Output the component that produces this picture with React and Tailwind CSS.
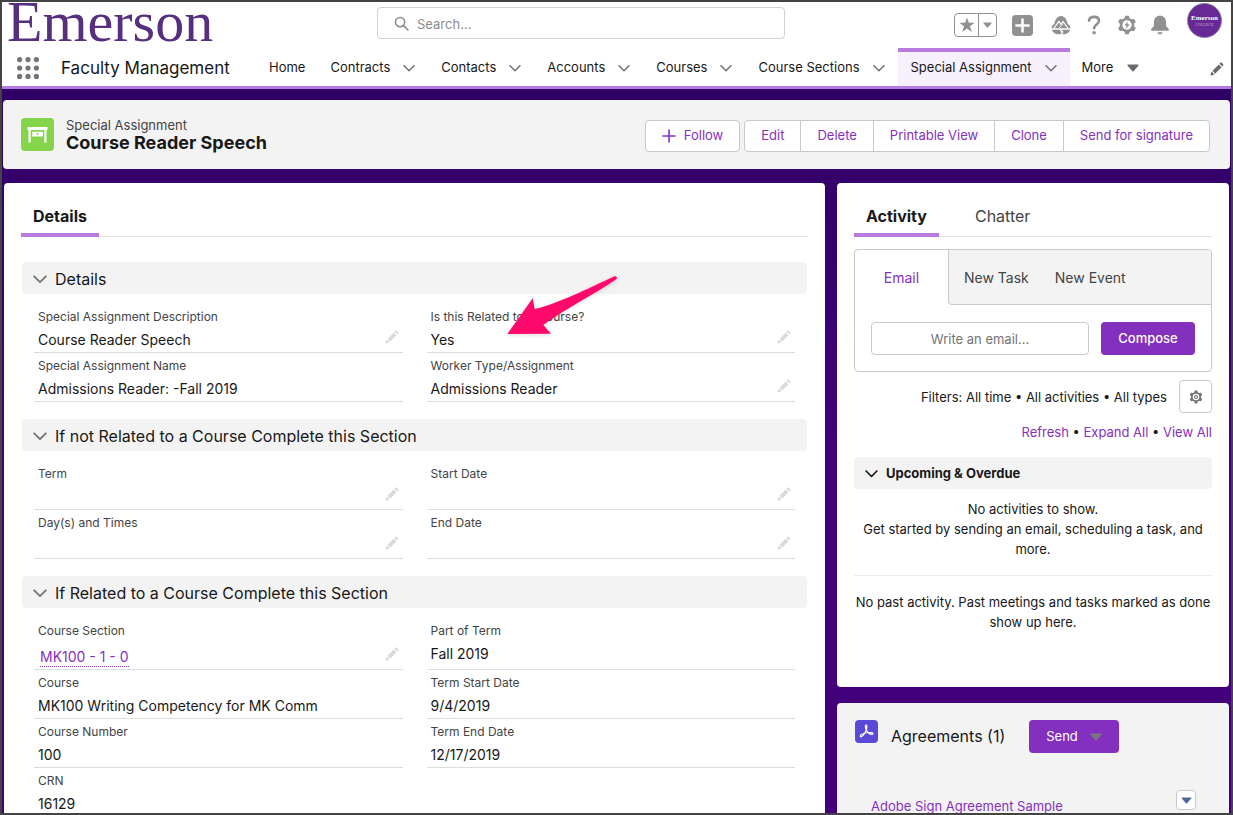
import React from 'react';

const EDIT_PATH =
  'M9.5 33.4l8.9 8.9c.4.4 1 .4 1.4 0L42 20c.4-.4.4-1 0-1.4l-8.8-8.8c-.4-.4-1-.4-1.4 0L9.5 32.1c-.4.4-.4 1 0 1.3zM36.1 5.7c-.4.4-.4 1 0 1.4l8.8 8.8c.4.4 1 .4 1.4 0l2.5-2.5c1.6-1.5 1.6-3.9 0-5.5l-4.7-4.7c-1.6-1.6-4.1-1.6-5.7 0l-2.3 2.5zM2.1 48.2c-.2 1 .7 1.9 1.7 1.7l10.9-2.6c.4-.1.7-.3.9-.5l.2-.2c.2-.2.3-.9-.1-1.3l-9-9c-.4-.4-1.1-.3-1.3-.1l-.2.2c-.3.3-.4.6-.5.9L2.1 48.2z';

function Pencil({ className }) {
  return (
    <svg viewBox="0 0 52 52" className={className} fill="currentColor" aria-hidden="true">
      <path d={EDIT_PATH} />
    </svg>
  );
}

function Chevron({ className }) {
  return (
    <svg viewBox="0 0 14 14" className={className} fill="none" stroke="currentColor" strokeWidth="1.8" strokeLinecap="round" strokeLinejoin="round" aria-hidden="true">
      <path d="M1.2 4.3 7 10.2l5.8-5.9" />
    </svg>
  );
}

function Triangle({ className }) {
  return (
    <svg viewBox="0 0 12 8" className={className} fill="currentColor" aria-hidden="true">
      <path d="M1.2.6h9.6c.7 0 1 .7.6 1.200L6.600 7.200c-.3.4-.9.4-1.200 0L.6 1.800C.2 1.300.500.600 1.200.600z" />
    </svg>
  );
}

function Gear({ className, bolt, hole }) {
  return (
    <svg viewBox="0 0 20 20" className={className} fill="currentColor" aria-hidden="true">
      <circle cx="10" cy="10" r="7.300" />
      {[0, 60, 120, 180, 240, 300].map((a) => (
        <path key={a} transform={`rotate(${a} 10 10)`} d="M8.100.8h3.800l.7 3.200H7.400z" />
      ))}
      <circle cx="10" cy="10" r="4.700" fill={hole} />
      {bolt ? <path d="M10.800 6.200 7.300 10.600h2.200l-.6 3.300 3.700-4.700h-2.300z" /> : <circle cx="10" cy="10" r="3" />}
      {!bolt && <circle cx="10" cy="10" r="1.300" fill={hole} />}
    </svg>
  );
}

function AppMenu() {
  return (
    <button aria-label="App launcher" className="ml-[15px] mr-[22px] shrink-0">
      <svg viewBox="0 0 22 22" className="size-[22px] text-[#747474]" fill="currentColor" aria-hidden="true">
        {[2.600, 11, 19.400].map((y) => [2.600, 11, 19.400].map((x) => <circle key={x + '-' + y} cx={x} cy={y} r="2.600" />))}
      </svg>
    </button>
  );
}

function TopBar() {
  return (
    <div className="flex h-[46px] items-center">
      <a href="#home" aria-label="Emerson home" className="w-[375px] shrink-0 self-start pl-[5px] font-['Liberation_Serif',serif] text-[58px] leading-10 text-[#56307e]">
        Emerson
      </a>
      <label className="-mt-1 flex h-8 max-w-[408px] flex-1 items-center rounded-[4px] border border-[#d2d2d2] pl-4 text-[#8c8c8c]">
        <svg viewBox="0 0 16 16" className="size-[15px] shrink-0" fill="none" stroke="currentColor" strokeWidth="1.700" strokeLinecap="round" aria-hidden="true">
          <circle cx="6.500" cy="6.500" r="4.900" />
          <path d="m10.300 10.300 4.600 4.600" />
        </svg>
        <span className="sr-only">Search</span>
        <input type="text" placeholder="Search..." className="ml-2 h-full w-full bg-transparent pt-px text-[13px] outline-none placeholder:text-[#8c8c8c]" />
      </label>
      <div className="ml-auto flex items-center gap-[13px] pr-[9px] text-[#919191]">
        <div className="mr-[2px] flex h-6 w-[43px] rounded-[4px] border border-[#919191]">
          <button aria-label="Favorite" className="flex w-6 items-center justify-center border-r border-[#919191]">
            <svg viewBox="0 0 16 16" className="size-4" fill="currentColor" aria-hidden="true">
              <path d="M8 .4l1.900 5.400h5.700L11 9.200l1.800 5.800L8 11.500 3.200 15 5 9.200.4 5.800h5.700z" />
            </svg>
          </button>
          <button aria-label="Favorites list" className="flex flex-1 items-center justify-center">
            <Triangle className="h-[6px] w-[9px]" />
          </button>
        </div>
        <button aria-label="Global actions" className="mr-[5px]">
          <svg viewBox="0 0 20 20" className="size-[21px]" aria-hidden="true">
            <rect width="20" height="20" rx="3.500" fill="currentColor" />
            <path d="M10 4.200v11.600M4.200 10h11.600" stroke="#fff" strokeWidth="2.400" strokeLinecap="round" />
          </svg>
        </button>
        <button aria-label="Guidance center">
          <svg viewBox="0 0 20 20" className="size-5" fill="currentColor" aria-hidden="true">
            <path d="M.6 13.300c0-2.400 1-3.500 2.600-4.300C4 4.600 6.500 1 10 1s6 3.600 6.800 8c1.600.8 2.600 1.900 2.600 4.300z" />
            <path d="M2.800 13.500 7.900 6.300l2.100 3 2-2.800 5.200 7" fill="none" stroke="#fff" strokeWidth="1.200" strokeLinejoin="round" />
            <path d="m8.300 12.800 3.700-4.300" fill="none" stroke="#fff" strokeWidth="1" />
            <path d="M.9 14.800h18.200c-.8 3-3.200 4.400-6.400 4.400H7.300c-3.200 0-5.600-1.400-6.400-4.400z" />
            <path d="M12 14.200c-3 .6-2.600 1.500-1 2.300 1 .5.500 1.800-1.500 2.900" fill="none" stroke="#fff" strokeWidth="1.400" />
          </svg>
        </button>
        <button aria-label="Help" className="flex size-5 items-center justify-center">
          <svg viewBox="0 0 14 20" className="h-5 w-[14px]" fill="none" stroke="currentColor" strokeWidth="2.600" strokeLinecap="round" aria-hidden="true">
            <path d="M2 5.600C2.300 3.200 4.200 1.900 7 1.900c2.900 0 5 1.500 5 4 0 3.400-4.900 3.700-4.900 7.300" />
            <circle cx="7.100" cy="17.700" r="1.800" fill="currentColor" stroke="none" />
          </svg>
        </button>
        <button aria-label="Setup">
          <Gear bolt hole="#fff" className="size-5" />
        </button>
        <button aria-label="Notifications">
          <svg viewBox="0 0 20 20" className="size-5" fill="currentColor" aria-hidden="true">
            <path d="M10 .8c-3.600 0-6 2.500-6 6v3.700c0 1.500-2.900 2.600-2.900 4.200 0 .6.400 1 1 1h15.800c.6 0 1-.4 1-1 0-1.600-2.900-2.700-2.900-4.200V6.800c0-3.500-2.400-6-6-6zM7.500 17.200h5c-.2 1.300-1.200 2.100-2.500 2.100s-2.300-.8-2.500-2.100z" />
          </svg>
        </button>
        <button aria-label="User profile" className="-mt-[9px] ml-1 flex size-[35px] flex-col items-center justify-center rounded-full border border-[#8e86a0] bg-[#672996] font-['Liberation_Serif',serif] text-white">
          <span className="text-[7px] leading-[7px] font-bold">Emerson</span>
          <span className="text-[4px] leading-[5px] text-[#c9aede]">COLLEGE</span>
        </button>
      </div>
    </div>
  );
}

const NAV = ['Contracts', 'Contacts', 'Accounts', 'Courses', 'Course Sections', 'Special Assignment'];

function NavBar() {
  return (
    <nav className="flex h-[41px] items-stretch border-b-[3px] border-[#b77ce0] whitespace-nowrap">
      <div className="flex items-center pt-[2px]">
        <AppMenu />
        <span className="w-[196px] text-[17px] leading-6">Faculty Management</span>
      </div>
      <a href="#home" className="flex items-center px-3 pt-[2px] text-[13px]">Home</a>
      {NAV.map((label) => {
        const active = label === 'Special Assignment';
        return (
          <div
            key={label}
            className={
              active
                ? 'flex items-center gap-[13px] border-t-4 border-[#b77ce0] bg-[#f7f1fd] px-[13px] pb-[2px]'
                : 'flex items-center gap-[13px] px-[13px] pt-[2px]'
            }
          >
            <a href={'#' + label} className="text-[13px]">{label}</a>
            <button aria-label={label + ' list'} className="text-[#747474]">
              <Chevron className="size-3" />
            </button>
          </div>
        );
      })}
      <button className="flex items-center gap-[14px] px-3 pt-[2px] text-[13px]">
        More
        <Triangle className="h-2 w-3 text-[#6b6b6b]" />
      </button>
      <button aria-label="Edit navigation" className="mr-[7px] ml-auto pt-[4px] text-[#6b6b6b]">
        <Pencil className="size-[14px]" />
      </button>
    </nav>
  );
}

function RecordHeader() {
  const actions = ['Edit', 'Delete', 'Printable View', 'Clone', 'Send for signature'];
  return (
    <header className="mx-[1px] flex h-[69px] items-center rounded-[4px] bg-[#f3f3f3] pr-5 pl-[18px]">
      <svg viewBox="0 0 33 33" className="size-[33px] shrink-0" aria-hidden="true">
        <rect width="33" height="33" rx="4" fill="#86d44b" />
        <path fill="#fff" d="M6.500 9h20v3h-1v12.500h-2.200V12H9.700v12.500H7.500V12h-1z" />
        <rect x="11.300" y="13.700" width="10.600" height="4.800" rx=".6" fill="#fff" />
        <circle cx="16.600" cy="16" r="1" fill="#86d44b" />
      </svg>
      <div className="ml-3 flex-1">
        <p className="text-[13px] leading-4 text-[#444444]">Special Assignment</p>
        <h1 className="text-[18px] leading-5 font-bold">Course Reader Speech</h1>
      </div>
      <div className="mt-[2px] flex h-8 gap-1 text-[13px] text-[#8430bf]">
        <button className="flex items-center gap-2 rounded-[4px] border border-[#c9c9c9] bg-white px-4 pt-px">
          <svg viewBox="0 0 14 14" className="size-[14px]" fill="none" stroke="currentColor" strokeWidth="1.600" strokeLinecap="round" aria-hidden="true">
            <path d="M7 1v12M1 7h12" />
          </svg>
          Follow
        </button>
        <div className="flex divide-x divide-[#c9c9c9] rounded-[4px] border border-[#c9c9c9] bg-white">
          {actions.map((a) => (
            <button key={a} className="px-4 pt-px">{a}</button>
          ))}
        </div>
      </div>
    </header>
  );
}

function Arrow() {
  return (
    <svg viewBox="0 0 112 60" className="pointer-events-none absolute -top-[29px] left-20 h-[60px] w-28 drop-shadow-sm" aria-hidden="true">
      <path fill="#ff0a6c" d="M.3 59 25.700 23.300l2 10.800C50 29 82 13 107 1.500c2.600-.9 3.900 1.500 2 3C86 20 58 34 36.300 50l7.700 8.700z" />
    </svg>
  );
}

function Field({ label, value, editable, link, arrow }) {
  return (
    <div className="relative flex items-end border-b border-[#dddddd] px-1 pt-[5px] pb-[2px]">
      <div className="flex-1 self-stretch">
        <dt className="text-[12px] leading-4 text-[#444444]">{label}</dt>
        <dd className="mt-[5px] min-h-5 text-[14px] leading-5">
          {link ? (
            <a href="#course-section" className="mt-1 ml-[2px] inline-block border-b border-dotted border-[#8430bf] leading-[18px] text-[#8430bf]">{value}</a>
          ) : (
            value
          )}
        </dd>
      </div>
      {editable && (
        <button aria-label={'Edit ' + label} className="mb-[6px] text-[#dcdad9]">
          <Pencil className="size-[14px]" />
        </button>
      )}
      {arrow && <Arrow />}
    </div>
  );
}

const SECTIONS = [
  {
    title: 'Details',
    fields: [
      { label: 'Special Assignment Description', value: 'Course Reader Speech', editable: true },
      { label: 'Is this Related to a Course?', value: 'Yes', editable: true, arrow: true },
      { label: 'Special Assignment Name', value: 'Admissions Reader: -Fall 2019' },
      { label: 'Worker Type/Assignment', value: 'Admissions Reader', editable: true },
    ],
  },
  {
    title: 'If not Related to a Course Complete this Section',
    fields: [
      { label: 'Term', editable: true },
      { label: 'Start Date', editable: true },
      { label: 'Day(s) and Times', editable: true },
      { label: 'End Date', editable: true },
    ],
  },
  {
    title: 'If Related to a Course Complete this Section',
    fields: [
      { label: 'Course Section', value: 'MK100 - 1 - 0', editable: true, link: true },
      { label: 'Part of Term', value: 'Fall 2019' },
      { label: 'Course', value: 'MK100 Writing Competency for MK Comm' },
      { label: 'Term Start Date', value: '9/4/2019' },
      { label: 'Course Number', value: '100' },
      { label: 'Term End Date', value: '12/17/2019' },
      { label: 'CRN', value: '16129' },
    ],
  },
];

function Tabs({ tabs }) {
  return (
    <div className="flex h-[54px] border-b border-[#e2e2e2]">
      {tabs.map((t, i) => (
        <button
          key={t}
          className={
            i === 0
              ? '-mb-px border-b-4 border-[#b77ce0] px-3 pt-[16px] text-[16px] font-bold'
              : 'ml-6 px-3 pt-[13px] text-[16px] text-[#444444]'
          }
        >
          {t}
        </button>
      ))}
    </div>
  );
}

function DetailsCard() {
  return (
    <section className="overflow-hidden rounded-t-[4px] bg-white px-[17px]">
      <Tabs tabs={['Details']} />
      <div className="space-y-[17px] px-px pt-[25px]">
        {SECTIONS.map((s) => (
          <section key={s.title}>
            <h2>
              <button className="flex h-8 w-full items-center gap-2 rounded-[4px] bg-[#f3f3f3] pt-px pl-[11px] text-[16px]">
                <Chevron className="size-[14px] text-[#747474]" />
                {s.title}
              </button>
            </h2>
            <dl className="mt-[10px] grid grid-cols-2 gap-x-6 px-3">
              {s.fields.map((f) => (
                <Field key={f.label} {...f} />
              ))}
            </dl>
          </section>
        ))}
      </div>
    </section>
  );
}

function ActivityCard() {
  return (
    <section className="rounded-[4px] bg-white px-[17px] pb-[55px]">
      <Tabs tabs={['Activity', 'Chatter']} />
      <div className="mt-3 overflow-hidden rounded-[4px] border border-[#c9c9c9]">
        <div className="flex h-[55px] text-[14px] text-[#444444]">
          <button className="w-[93px] text-[#8430bf]">Email</button>
          <div className="flex flex-1 gap-[26px] rounded-bl-[4px] border-b border-l border-[#c9c9c9] bg-[#f3f3f3] pl-[15px]">
            <button>New Task</button>
            <button>New Event</button>
          </div>
        </div>
        <div className="flex gap-3 px-4 pt-[17px] pb-4 text-[13px]">
          <input
            type="text"
            aria-label="Write an email"
            placeholder="Write an email..."
            className="h-[33px] min-w-0 flex-1 rounded-[4px] border border-[#c9c9c9] text-center outline-none placeholder:text-[#747474]"
          />
          <button className="h-[33px] w-[94px] rounded-[4px] bg-[#8430bf] pt-px font-medium text-white">Compose</button>
        </div>
      </div>
      <div className="mt-2 flex items-center justify-end gap-3 text-[13px]">
        <p className="pt-[3px]">Filters: All time • All activities • All types</p>
        <button aria-label="Filter settings" className="flex size-[33px] items-center justify-center rounded-[4px] border border-[#c9c9c9] text-[#747474]">
          <Gear hole="#fff" className="size-[14px]" />
        </button>
      </div>
      <p className="mt-[9px] text-right text-[13px] leading-5">
        <a href="#refresh" className="text-[#8430bf]">Refresh</a> • <a href="#expand" className="text-[#8430bf]">Expand All</a> • <a href="#view" className="text-[#8430bf]">View All</a>
      </p>
      <h2 className="mt-[15px]">
        <button className="flex h-8 w-full items-center gap-2 rounded-[4px] bg-[#f3f3f3] pt-px pl-[11px] text-[13px] font-bold">
          <Chevron className="size-[13px]" />
          Upcoming &amp; Overdue
        </button>
      </h2>
      <div className="mt-[10px] border-b border-[#ececec] pb-4 text-center text-[13px] leading-5">
        <p>No activities to show.</p>
        <p>Get started by sending an email, scheduling a task, and more.</p>
      </div>
      <p className="mt-4 text-center text-[13px] leading-5">No past activity. Past meetings and tasks marked as done show up here.</p>
    </section>
  );
}

function AgreementsCard() {
  return (
    <section className="flex-1 rounded-t-[4px] bg-[#f3f3f3] px-[17px] pt-[17px]">
      <div className="flex items-start pl-px">
        <svg viewBox="0 0 23 23" className="size-[23px]" aria-hidden="true">
          <rect width="23" height="23" rx="4" fill="#5a49d6" />
          <path
            d="M11.200 5c-1.300.1-.9 2.600.2 4.900 1.200 2.400 3.300 4.400 5.500 4.500 1.600 0 1.500-1.600-.5-1.800-3-.3-7.200.4-10 2-1.900 1.200-1.100 2.900.3 1.900 2-1.400 4.200-5.100 5-8.400.4-1.700.3-3.100-.5-3.100z"
            fill="none"
            stroke="#fff"
            strokeWidth="1.200"
            strokeLinejoin="round"
          />
        </svg>
        <h2 className="ml-[13px] text-[16px] leading-8">Agreements (1)</h2>
        <button className="ml-6 flex h-[33px] items-center gap-3 rounded-[4px] bg-[#8430bf] px-[17px] text-[13px] text-white">
          Send
          <Triangle className="h-2 w-3 text-[#7b7581]" />
        </button>
      </div>
      <div className="mt-[37px] flex items-start justify-between pr-4 pl-[17px]">
        <a href="#agreement" className="mt-1 text-[13px] leading-6 text-[#8430bf]">Adobe Sign Agreement Sample</a>
        <button aria-label="Agreement actions" className="flex size-5 items-center justify-center rounded-[4px] border border-[#c9c9c9] bg-white text-[#4a6a96]">
          <Triangle className="h-[7px] w-[11px]" />
        </button>
      </div>
    </section>
  );
}

export default function App() {
  return (
    <div className="flex h-screen flex-col overflow-hidden border-2 border-[#444444] bg-white font-['Inter','Liberation_Sans',sans-serif] text-[#181818]">
      <TopBar />
      <NavBar />
      <main className="flex min-h-0 flex-1 flex-col bg-linear-to-b from-[#2f0066] to-[#42007a] to-50% pt-[11px]">
        <RecordHeader />
        <div className="mt-[14px] grid min-h-0 flex-1 grid-cols-[minmax(0,821fr)_minmax(0,392fr)] gap-3 px-[2px]">
          <DetailsCard />
          <div className="flex min-h-0 flex-col gap-4 overflow-hidden">
            <ActivityCard />
            <AgreementsCard />
          </div>
        </div>
      </main>
    </div>
  );
}
